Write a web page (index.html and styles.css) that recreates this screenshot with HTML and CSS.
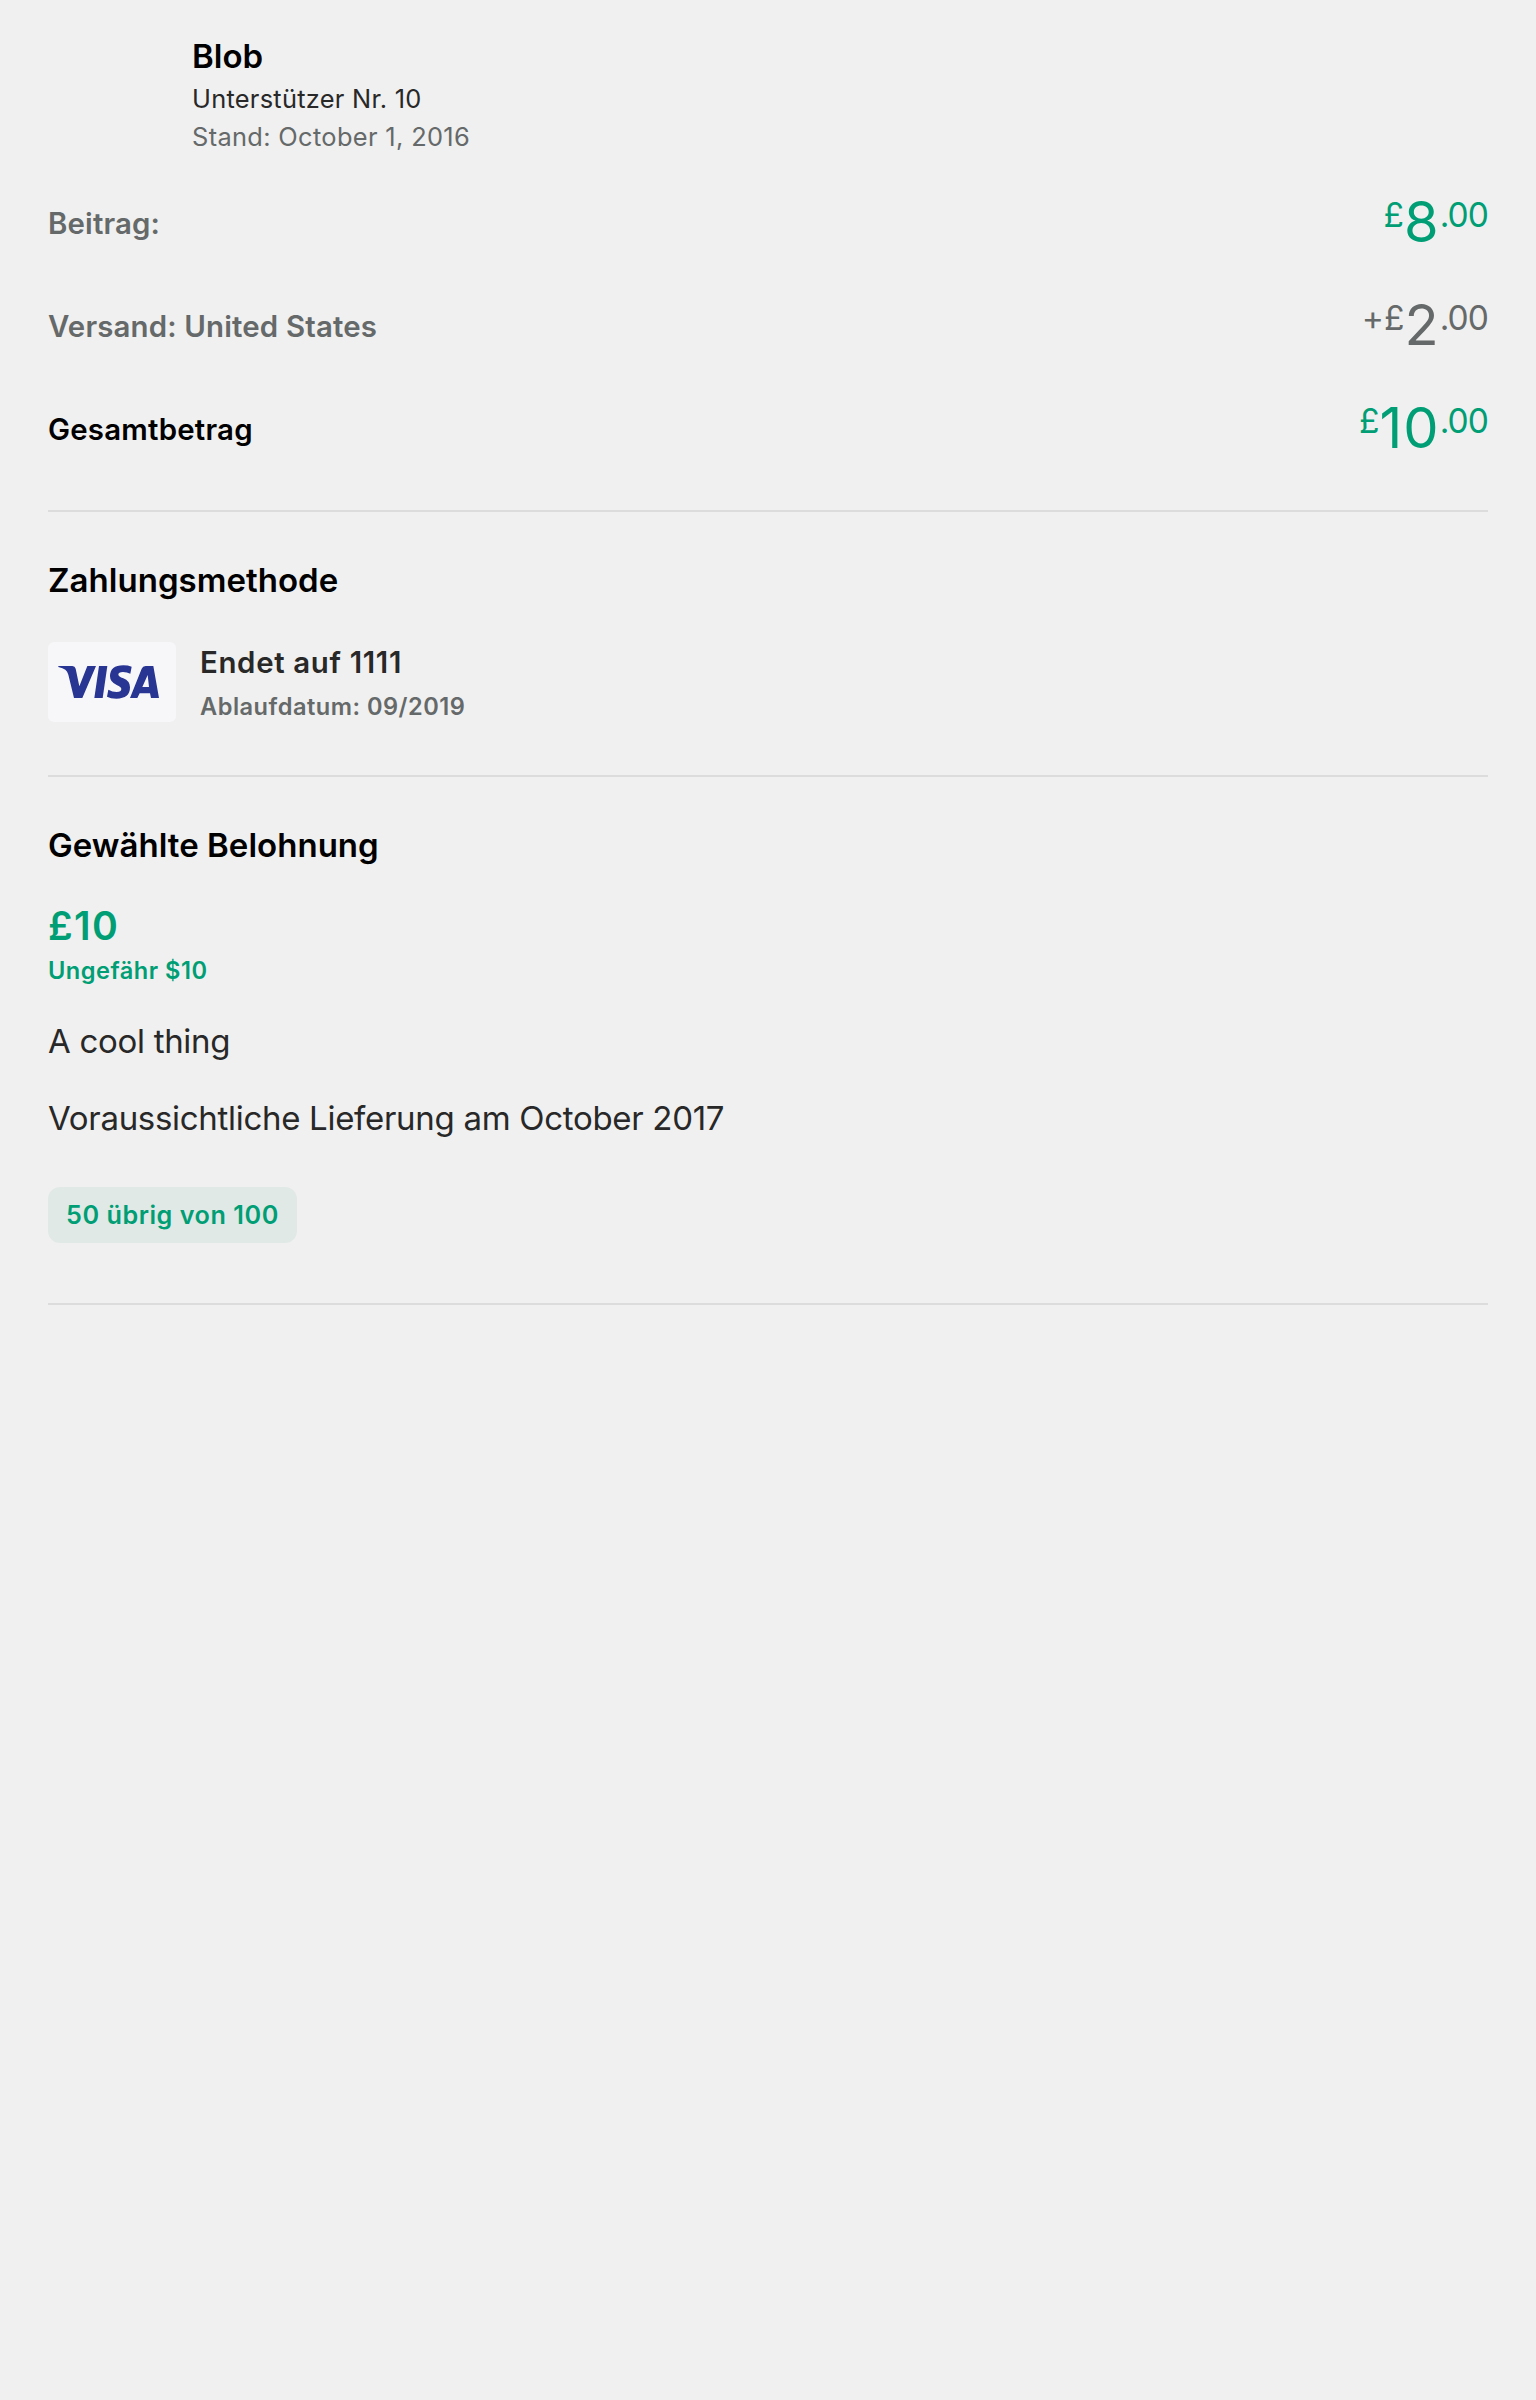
FILE: index.html
```html
<!DOCTYPE html>
<html lang="de">
<head>
<meta charset="utf-8">
<title>Blob</title>
<link rel="stylesheet" href="styles.css">
</head>
<body>
<main class="page">
  <header class="backer">
    <h1 class="title">Blob</h1>
    <p class="backer-number">Unterstützer Nr. 10</p>
    <p class="backer-date">Stand: October 1, 2016</p>
  </header>

  <section class="amounts">
    <div class="amount-row">
      <span class="label">Beitrag:</span>
      <span class="amount"><span class="small">£</span><span class="big">8</span><span class="small cents">.00</span></span>
    </div>
    <div class="amount-row muted">
      <span class="label">Versand: United States</span>
      <span class="amount"><span class="small plus">+</span><span class="small">£</span><span class="big">2</span><span class="small cents">.00</span></span>
    </div>
    <div class="amount-row total">
      <span class="label">Gesamtbetrag</span>
      <span class="amount"><span class="small">£</span><span class="big">10</span><span class="small cents">.00</span></span>
    </div>
  </section>

  <section class="section payment">
    <h2 class="title">Zahlungsmethode</h2>
    <div class="card-row">
      <svg class="card" viewBox="0 0 384 240" role="img" aria-label="Visa">
        <path d="M31 72H73Q81 72 83 80L94 133L118 72H144L103 168H78L61 98Q58 87 52 83Q45 78 31 75Z"/>
        <path d="M153 72H178L164 168H139Z"/>
        <path d="M251 74L247 95Q237 90 225 90Q211 90 211 98Q211 103 226 109Q246 117 246 136Q246 170 205 170Q188 170 177 164L181 143Q193 150 206 150Q220 150 220 141Q220 135 206 129Q186 120 186 103Q186 70 226 70Q240 70 251 74Z"/>
        <path fill-rule="evenodd" d="M293 72H316L333 168H309L306 154H275L268 168H246L281 80Q284 72 293 72ZM299 99L283 135H303Z"/>
      </svg>
      <div class="card-info">
        <p class="card-name">Endet auf 1111</p>
        <p class="card-expiry">Ablaufdatum: 09/2019</p>
      </div>
    </div>
  </section>

  <section class="section reward">
    <h2 class="title">Gewählte Belohnung</h2>
    <p class="pledge">£10</p>
    <p class="converted">Ungefähr $10</p>
    <p class="body-text description">A cool thing</p>
    <p class="body-text delivery">Voraussichtliche Lieferung am October 2017</p>
    <span class="badge">50 übrig von 100</span>
  </section>
</main>
</body>
</html>
```
FILE: styles.css
```css
* { box-sizing: border-box; }

body {
  margin: 0;
  background: #f0f0f0;
  color: #282828;
  font-family: Inter, "Liberation Sans", sans-serif;
}

h1, h2, p { margin: 0; }

.page { padding: 36px 48px 0; }

.title {
  font-size: 33px;
  font-weight: 600;
  line-height: 40px;
  letter-spacing: 0.03px;
  color: #000;
}

.backer { padding-left: 144px; }

.backer-number,
.backer-date {
  font-size: 25.4px;
  line-height: 38px;
  letter-spacing: 0.27px;
}
.backer-number { margin-top: 4px; }
.backer-date { color: #656969; letter-spacing: 0.34px; }

.amounts {
  padding: 16px 0 29px;
  border-bottom: 2px solid #dcdcdc;
}

.amount-row {
  display: flex;
  align-items: center;
  justify-content: space-between;
  height: 103px;
  color: #009e74;
}

.label {
  font-size: 29.4px;
  font-weight: 600;
  line-height: 36px;
  letter-spacing: 0.16px;
  color: #656969;
}
.muted { color: #656969; }
.total .label { color: #000; letter-spacing: 0.23px; }

.amount {
  display: flex;
  align-items: baseline;
  height: 68px;
  margin-top: -3px;
}
.big {
  font-size: 56px;
  line-height: 68px;
  letter-spacing: 1px;
}
.small {
  font-size: 33.5px;
  line-height: 38px;
  padding-bottom: 15px;
  transform: translateY(-15px);
}
.cents { letter-spacing: -0.9px; }

.section {
  padding-top: 48px;
  border-bottom: 2px solid #dcdcdc;
}
.payment { padding-bottom: 53px; }
.reward { padding-bottom: 60px; }

.card-row {
  display: flex;
  gap: 24px;
  margin-top: 42px;
}
.card {
  width: 128px;
  height: 80px;
  border-radius: 6px;
  background: #f7f7fa;
  fill: #283593;
}
.card-info { padding-top: 3px; }
.card-name {
  font-size: 29.4px;
  font-weight: 600;
  line-height: 36px;
  letter-spacing: 0.67px;
}
.card-expiry {
  margin-top: 11px;
  font-size: 23.6px;
  font-weight: 600;
  line-height: 30px;
  letter-spacing: 0.5px;
  color: #656969;
}

.pledge {
  margin-top: 37px;
  font-size: 39.2px;
  font-weight: 600;
  line-height: 48px;
  letter-spacing: 1.4px;
  color: #009e74;
}
.converted {
  margin-top: 6px;
  font-size: 23.6px;
  font-weight: 600;
  line-height: 30px;
  letter-spacing: 0.5px;
  color: #009e74;
}

.body-text {
  font-size: 33px;
  line-height: 40px;
  letter-spacing: -0.3px;
}
.description { margin-top: 35px; }
.delivery { margin-top: 37px; }

.badge {
  display: block;
  width: fit-content;
  margin-top: 49px;
  padding: 0 18px;
  border-radius: 12px;
  background: #e1e9e7;
  font-size: 25.2px;
  font-weight: 600;
  line-height: 56px;
  letter-spacing: 0.54px;
  color: #009e74;
}
```
